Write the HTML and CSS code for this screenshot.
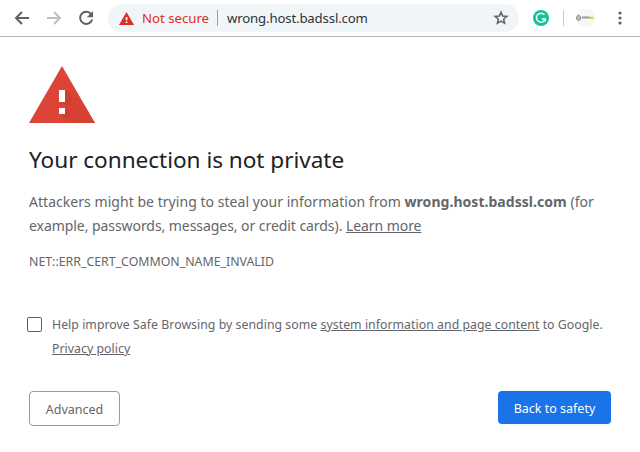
FILE: index.html
```html
<!DOCTYPE html>
<html lang="en">
<head>
<meta charset="utf-8">
<title>Privacy error</title>
<link rel="stylesheet" href="styles.css">
</head>
<body>
<header class="toolbar">
  <nav class="nav">
    <svg class="icon" viewBox="0 0 16 16"><path d="M15 8H2.4M8 2L2 8l6 6" fill="none" stroke="#5f6164" stroke-width="2"/></svg>
    <svg class="icon" viewBox="0 0 16 16"><path d="M1 8h12.6M8 2l6 6-6 6" fill="none" stroke="#bcbec0" stroke-width="2"/></svg>
    <svg class="icon" viewBox="0 0 16 16"><path d="M13.1 4.1A6.1 6.1 0 1 0 14.1 9.4" fill="none" stroke="#5f6164" stroke-width="2"/><path d="M15 1v6.2H8.8z" fill="#5f6164"/></svg>
  </nav>
  <div class="omnibox">
    <svg class="warn" viewBox="0 0 15 13"><path d="M7.5 0L15 13H0z" fill="#d93025"/><path d="M6.7 5h1.7v3.3H6.7zM6.7 9.4h1.7V11H6.7z" fill="#fff"/></svg>
    <span class="status">Not secure</span>
    <span class="divider"></span>
    <span class="url">wrong.host.badssl.com</span>
    <svg class="star" viewBox="0 0 16 16"><path d="M8 2.2l1.65 3.9 4.2.35-3.2 2.75.97 4.1L8 11.1l-3.62 2.2.97-4.1-3.2-2.75 4.2-.35z" fill="none" stroke="#5f6164" stroke-width="1.5"/></svg>
  </div>
  <svg class="ext" viewBox="0 0 16 16"><circle cx="8" cy="8" r="8" fill="#15c39a"/><path d="M11.4 4.8A4.5 4.5 0 1 0 12.3 9H9M12.3 8.6v3" fill="none" stroke="#fff" stroke-width="1.4"/></svg>
  <span class="separator"></span>
  <svg class="avatar" viewBox="0 0 20 20"><circle cx="10" cy="10" r="9.5" fill="#f7f7f7"/><path d="M2.6 6.8l2 2v2.4l-2 1.6-2-1.6V8.8z" fill="#bbb" stroke="#888" stroke-width=".9"/><path d="M6 9.5h7" stroke="#999" stroke-width="2"/><path d="M13 9.8h4.4" stroke="#e3cc44" stroke-width="2.2"/></svg>
  <svg class="menu" viewBox="0 0 4 14"><g fill="#5f6164"><circle cx="2" cy="2" r="1.6"/><circle cx="2" cy="7" r="1.6"/><circle cx="2" cy="12" r="1.6"/></g></svg>
</header>
<main class="page">
  <svg class="alert" viewBox="0 0 66 57"><path d="M33 0l33 57H0z" fill="#db4437"/><path d="M36 24l18 14 12 19H41l-11-9h6z" fill="#d64134"/><path d="M36 24l7 7v6l-5 3-8-4h6zM36 42l6 6-4 5-8-5h6z" fill="#c9402f" opacity=".75"/><path d="M30 24h6v12h-6zM30 42h6v6h-6z" fill="#fff"/></svg>
  <h1 class="title">Your connection is not private</h1>
  <p class="message">Attackers might be trying to steal your information from <strong>wrong.host.badssl.com</strong> (for<br><span class="line-two">example, passwords, messages, or credit cards). <a class="link">Learn more</a></span></p>
  <p class="code">NET::ERR_CERT_COMMON_NAME_INVALID</p>
  <div class="opt-in">
    <span class="checkbox"></span>
    <p class="opt-text">Help improve Safe Browsing by sending some <a class="link">system information and page content</a> to Google.<br><a class="link">Privacy policy</a></p>
  </div>
  <div class="actions">
    <button class="button">Advanced</button>
    <button class="button primary">Back to safety</button>
  </div>
</main>
</body>
</html>
```
FILE: styles.css
```css
* { box-sizing: border-box; }
body { margin: 0; background: #fff; color: #646669; font-family: "Noto Sans", sans-serif; white-space: nowrap; overflow: hidden; }
svg { display: block; flex: none; }
h1, p { margin: 0; }
.toolbar { height: 37px; padding: 0 18px 0 14px; display: flex; align-items: center; border-bottom: 1px solid #b4b5b7; }
.nav { display: flex; gap: 16px; margin-right: 14px; }
.icon { width: 16px; height: 16px; }
.omnibox { width: 411px; height: 28px; border-radius: 14px; background: #f0f5f8; display: flex; align-items: center; padding: 0 10px 0 11px; font-size: 13.2px; line-height: 18px; }
.warn { width: 15px; height: 13px; margin-right: 8px; }
.status { color: #d93025; width: 75px; padding-bottom: 1px; }
.divider { width: 1px; height: 16px; background: #9b9da0; margin-right: 9px; }
.url { color: #303236; flex: 1; padding-bottom: 1px; letter-spacing: -.15px; }
.star { width: 16px; height: 16px; }
.ext { width: 16px; height: 16px; margin-left: 14px; }
.separator { width: 1px; height: 16px; background: #c9cacc; margin-left: 14px; }
.avatar { width: 20px; height: 20px; margin-left: 12px; }
.menu { width: 4px; height: 14px; margin-left: auto; }
.page { padding: 29px 29px 0; }
.alert { width: 66px; height: 57px; }
.title { margin-top: 21px; font-size: 22.6px; line-height: 32px; font-weight: 400; color: #202124; letter-spacing: -.04px; }
.message { margin-top: 14px; font-size: 14px; line-height: 24px; letter-spacing: .04px; }
.line-two { letter-spacing: -.06px; }
.link { text-decoration: underline; }
.code { margin-top: 12px; font-size: 12.35px; line-height: 24px; }
.opt-in { display: flex; margin-top: 39px; margin-left: -2px; }
.checkbox { width: 15px; height: 15px; border: 1px solid #5f6164; border-radius: 2px; margin: 4px 10px 0 0; }
.opt-text { font-size: 12.3px; line-height: 24px; letter-spacing: .035px; }
.actions { display: flex; justify-content: space-between; align-items: flex-start; margin-top: 30px; }
.button { width: 91px; height: 35px; padding: 2px 0 0; border: 1px solid #999b9e; border-radius: 4px; background: #fff; color: #646669; font: 12.5px/20px "Noto Sans", sans-serif; }
.primary { width: 113px; height: 33px; border: 0; background: #1a73e8; color: #fff; }
```
